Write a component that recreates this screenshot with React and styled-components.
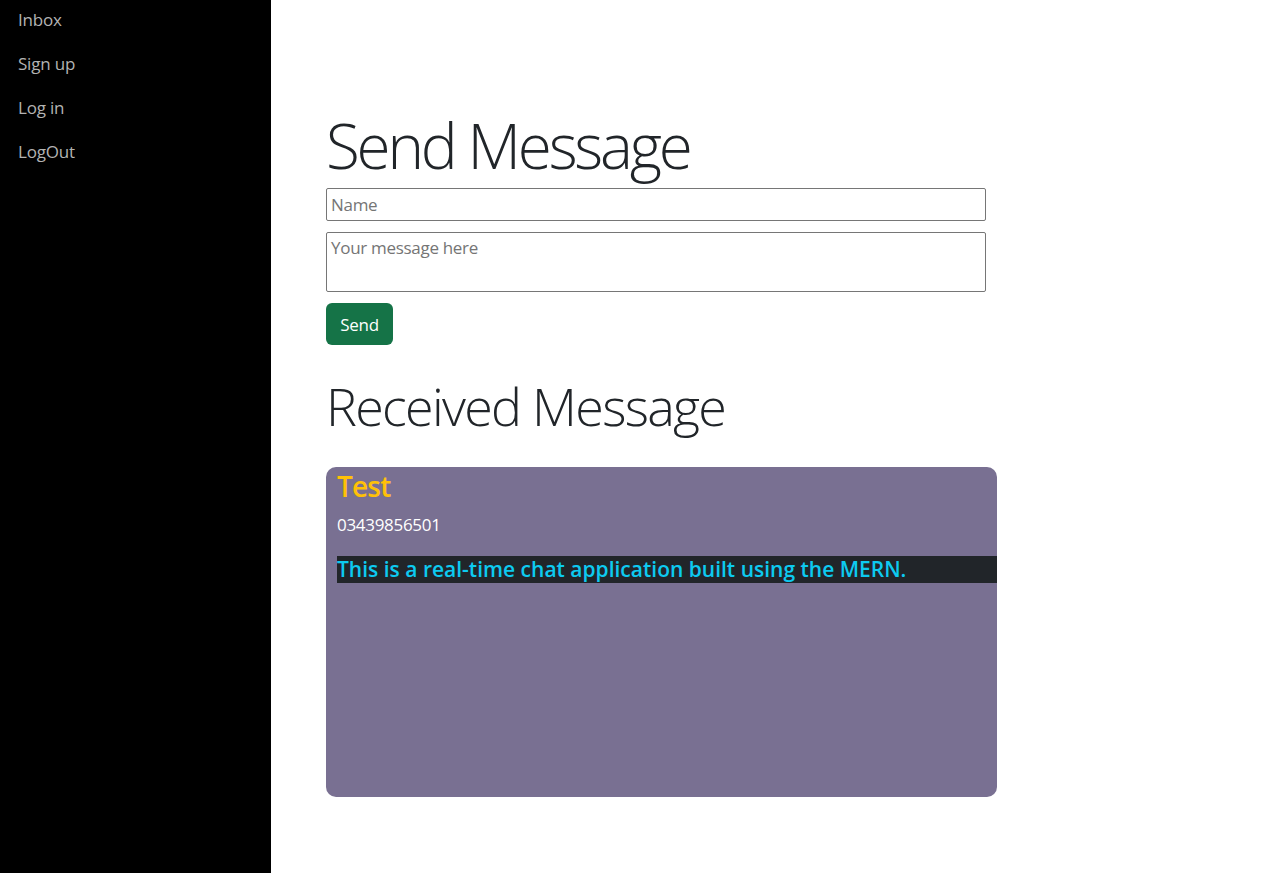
import React from "react";
import styled, { createGlobalStyle } from "styled-components";

const Global = createGlobalStyle`
  html, body { margin: 0; padding: 0; background: #fff; }
  body { font-family: "Open Sans", "Noto Sans", sans-serif; color: #212529; }
  * { box-sizing: border-box; }
`;

const Layout = styled.div`
  display: flex;
  min-height: 873px;
`;

const Sidebar = styled.nav`
  width: 271px;
  flex-shrink: 0;
  background: #000;
  display: flex;
  flex-direction: column;
  padding: 8px 0 0 18px;
`;

const NavLink = styled.a`
  color: #b3b3b3;
  font-size: 17px;
  line-height: 24px;
  height: 44px;
  text-decoration: none;
  font-family: "Open Sans", sans-serif;
  letter-spacing: -0.2px;
`;

const Main = styled.main`
  flex: 1;
  padding: 108px 0 0 55px;
  display: flex;
  flex-direction: column;
`;

const Display = styled.h1`
  margin: 0 0 ${(p) => p.mb}px;
  font-weight: 300;
  font-size: ${(p) => p.size}px;
  line-height: 1.2;
  letter-spacing: ${(p) => p.ls}px;
  color: #212529;
`;

const Form = styled.form`
  width: 660px;
  display: flex;
  flex-direction: column;
  align-items: flex-start;
  gap: 11px;
  margin-bottom: 30px;
`;

const Input = styled.input`
  width: 660px;
  height: 33px;
  border: 1px solid #767676;
  border-radius: 2px;
  padding: 0 4px;
  font: 17px "Open Sans", sans-serif;
  letter-spacing: -0.3px;
  &::placeholder { color: #757575; }
`;

const TextArea = styled.textarea`
  width: 660px;
  height: 60px;
  border: 1px solid #767676;
  border-radius: 2px;
  padding: 3px 4px;
  font: 17px "Open Sans", sans-serif;
  letter-spacing: -0.3px;
  resize: none;
  &::placeholder { color: #757575; }
`;

const Button = styled.button`
  background: #157347;
  color: #fff;
  border: none;
  border-radius: 6px;
  width: 67px;
  height: 42px;
  font: 17px "Open Sans", sans-serif;
  letter-spacing: -0.3px;
  padding: 0;
`;

const Card = styled.div`
  width: 671px;
  height: 330px;
  background: #797092;
  border-radius: 10px;
  padding: 0 0 0 11px;
  display: flex;
  flex-direction: column;
`;

const CardTitle = styled.h3`
  margin: 0;
  color: #ffc107;
  font-size: 28px;
  font-weight: 600;
  line-height: 38px;
  letter-spacing: -0.8px;
`;

const Phone = styled.p`
  margin: 8px 0 0;
  color: #fff;
  font-size: 17px;
  line-height: 24px;
  letter-spacing: -0.3px;
`;

const Message = styled.h5`
  margin: 19px 0 0;
  background: #212529;
  color: #0dcaf0;
  font-size: 21px;
  font-weight: 600;
  line-height: 27px;
  letter-spacing: 0;
`;

export default function App() {
  return (
    <>
      <Global />
      <Layout>
        <Sidebar>
          <NavLink href="#">Inbox</NavLink>
          <NavLink href="#">Sign up</NavLink>
          <NavLink href="#">Log in</NavLink>
          <NavLink href="#">LogOut</NavLink>
        </Sidebar>
        <Main>
          <Display size={62} ls={-3.2} mb={6}>Send Message</Display>
          <Form onSubmit={(e) => e.preventDefault()}>
            <Input placeholder="Name" />
            <TextArea placeholder="Your message here" />
            <Button type="submit">Send</Button>
          </Form>
          <Display size={52} ls={-1.7} mb={29}>Received Message</Display>
          <Card>
            <CardTitle>Test</CardTitle>
            <Phone>03439856501</Phone>
            <Message>This is a real-time chat application built using the MERN.</Message>
          </Card>
        </Main>
      </Layout>
    </>
  );
}
